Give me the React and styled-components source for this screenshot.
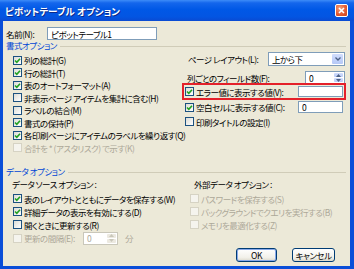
import React from 'react';
import styled, { createGlobalStyle } from 'styled-components';

const GlobalStyle = createGlobalStyle`
  html, body {
    margin: 0;
    padding: 0;
    background: #ffffff;
  }
  body {
    font-family: "Noto Sans CJK JP", "Noto Sans", sans-serif;
  }
`;

const Window = styled.div`
  width: 354px;
  height: 269px;
  display: flex;
  flex-direction: column;
  background: #0a4ed8;
  overflow: hidden;
  font-feature-settings: "palt";
`;

const TitleBar = styled.div`
  height: 21px;
  flex: none;
  box-sizing: border-box;
  padding: 0 6px 0 5px;
  display: flex;
  align-items: center;
  justify-content: space-between;
  background: linear-gradient(#3d8cf8 0%, #1466ec 14%, #0058e6 45%, #0355e2 80%, #0a4ad2 100%);
`;

const Title = styled.span`
  color: #ffffff;
  font-size: 9.5px;
  font-weight: bold;
  line-height: 12px;
  text-shadow: 1px 1px 0 #0b2a8a;
`;

const CloseButton = styled.div`
  width: 13px;
  height: 13px;
  box-sizing: border-box;
  border: 1px solid #ffffff;
  border-radius: 2px;
  background: radial-gradient(circle at 35% 30%, #f4a07c 0%, #e45c33 55%, #c8401c 100%);
  display: flex;
  align-items: center;
  justify-content: center;
`;

const Body = styled.div`
  flex: 1;
  min-height: 0;
  margin: 0 4px 3px 3px;
  background: #ece9d8;
  display: flex;
  flex-direction: column;
  font-size: 8.5px;
  letter-spacing: -0.5px;
  line-height: 12px;
  color: #000000;
`;

const NameRow = styled.div`
  display: flex;
  align-items: center;
  padding: 6px 0 0 3px;
  height: 13px;
`;

const Label = styled.span`
  flex: none;
  width: ${p => (p.$width ? `${p.$width}px` : 'auto')};
  padding-left: ${p => p.$indent || 0}px;
  color: ${p => (p.$disabled ? '#aca899' : '#000000')};
  white-space: nowrap;
`;

const TextBox = styled.div`
  box-sizing: border-box;
  width: ${p => p.$width}px;
  height: ${p => p.$height || 13}px;
  margin-right: ${p => p.$right || 0}px;
  border: 1px solid #7f9db9;
  background: #ffffff;
  padding-left: 3px;
  display: flex;
  align-items: center;
  white-space: nowrap;
`;

const SectionHeader = styled.div`
  display: flex;
  align-items: center;
  gap: 3px;
  height: 10px;
  margin-top: ${p => p.$top || 0}px;
  padding: 0 4px 0 3px;
  color: #0046d5;
  white-space: nowrap;

  &::after {
    content: '';
    flex: 1;
    height: 1px;
    margin-top: 3px;
    background: #d0ccb8;
  }
`;

const Columns = styled.div`
  display: grid;
  grid-template-columns: ${p => p.$left}px 1fr;
  margin-top: ${p => p.$top || 0}px;
  padding-right: 4px;
`;

const Column = styled.div`
  display: flex;
  flex-direction: column;
  padding-top: ${p => p.$top || 0}px;
  padding-left: ${p => p.$left || 0}px;
`;

const Row = styled.div`
  display: flex;
  align-items: center;
  gap: ${p => p.$gap ?? 2}px;
  height: ${p => p.$h || 12.5}px;
  margin-top: ${p => p.$top || 0}px;
  justify-content: ${p => (p.$spread ? 'space-between' : 'flex-start')};
  white-space: nowrap;
`;

const Highlight = styled.div`
  box-sizing: border-box;
  height: 17px;
  margin: -1px 0 0 -3px;
  padding: 0 1px 0 1px;
  border: 2px solid #e4202a;
  display: flex;
  align-items: center;
  justify-content: space-between;
  white-space: nowrap;
`;

const Box = styled.span`
  flex: none;
  box-sizing: border-box;
  width: 9px;
  height: 9px;
  border: 1px solid ${p => (p.$disabled ? '#d6d3c4' : '#1c5180')};
  background: ${p => (p.$disabled ? '#f5f4ee' : 'linear-gradient(135deg, #dcdcd5, #ffffff)')};
  display: flex;
  align-items: center;
  justify-content: center;
`;

const Control = styled.div`
  box-sizing: border-box;
  flex: none;
  width: ${p => p.$width}px;
  height: ${p => p.$height || 13}px;
  margin-right: ${p => p.$right || 0}px;
  border: 1px solid ${p => (p.$disabled ? '#c9c7ba' : '#7f9db9')};
  background: #ffffff;
  color: ${p => (p.$disabled ? '#aca899' : '#000000')};
  display: flex;
  align-items: stretch;
`;

const ControlText = styled.span`
  flex: 1;
  padding-left: 3px;
  display: flex;
  align-items: center;
`;

const DropButton = styled.span`
  width: 11px;
  margin: 1px;
  border-radius: 1px;
  background: linear-gradient(#d2defd, #b5c8f7);
  display: flex;
  align-items: center;
  justify-content: center;
`;

const SpinButtons = styled.span`
  width: 9px;
  margin: 1px;
  display: flex;
  flex-direction: column;
  gap: 1px;
`;

const SpinHalf = styled.span`
  flex: 1;
  border-radius: 1px;
  background: ${p => (p.$disabled ? '#ece9e0' : 'linear-gradient(#d2defd, #b9cbf8)')};
  display: flex;
  align-items: center;
  justify-content: center;
`;

const ButtonRow = styled.div`
  display: flex;
  justify-content: flex-end;
  gap: 15px;
  margin-top: 3px;
  padding-right: 15px;
`;

const Button = styled.div`
  box-sizing: border-box;
  width: ${p => p.$width}px;
  height: 14px;
  border: 1px solid #003c74;
  border-radius: 3px;
  background: linear-gradient(#ffffff 0%, #f2f1ea 70%, #dcd9cc 100%);
  box-shadow: ${p => (p.$default ? 'inset 0 0 0 1px #88a9ea' : 'none')};
  display: flex;
  align-items: center;
  justify-content: center;
`;

const Check = ({ on, disabled }) => (
  <Box $disabled={disabled}>
    {on && (
      <svg width="7" height="7" viewBox="0 0 7 7">
        <polyline points="1,3.5 2.8,5.3 6,1.8" fill="none" stroke="#21a121" strokeWidth="1.6" />
      </svg>
    )}
  </Box>
);

const Spin = ({ width, value, disabled, right }) => (
  <Control $width={width} $disabled={disabled} $right={right}>
    <ControlText>{value}</ControlText>
    <SpinButtons>
      <SpinHalf $disabled={disabled}>
        <svg width="5" height="3" viewBox="0 0 5 3">
          <polygon points="0,3 2.5,0 5,3" fill={disabled ? '#c9c7ba' : '#4d6185'} />
        </svg>
      </SpinHalf>
      <SpinHalf $disabled={disabled}>
        <svg width="5" height="3" viewBox="0 0 5 3">
          <polygon points="0,0 2.5,3 5,0" fill={disabled ? '#c9c7ba' : '#4d6185'} />
        </svg>
      </SpinHalf>
    </SpinButtons>
  </Control>
);

const formatChecks = [
  ['列の総計(G)', true],
  ['行の総計(T)', true],
  ['表のオートフォーマット(A)', true],
  ['非表示ページ アイテムを集計に含む(H)', false],
  ['ラベルの結合(M)', false],
  ['書式の保持(P)', true],
  ['各印刷ページにアイテムのラベルを繰り返す(Q)', true],
  ['合計を * (アスタリスク) で示す(K)', false, true],
];

const sourceChecks = [
  ['表のレイアウトとともにデータを保存する(W)', true],
  ['詳細データの表示を有効にする(D)', true],
  ['開くときに更新する(R)', false],
];

const externalChecks = [
  'パスワードを保存する(S)',
  'バックグラウンドでクエリを実行する(B)',
  'メモリを最適化する(Z)',
];

export default function App() {
  return (
    <>
      <GlobalStyle />
      <Window>
        <TitleBar>
          <Title>ピボットテーブル オプション</Title>
          <CloseButton>
            <svg width="7" height="7" viewBox="0 0 7 7">
              <path d="M1 1 L6 6 M6 1 L1 6" stroke="#ffffff" strokeWidth="1.6" />
            </svg>
          </CloseButton>
        </TitleBar>
        <Body>
          <NameRow>
            <Label $width={41}>名前(N):</Label>
            <TextBox $width={110}>ピボットテーブル1</TextBox>
          </NameRow>

          <SectionHeader>書式オプション</SectionHeader>
          <Columns $left={182} $top={2}>
            <Column $top={2} $left={10}>
              {formatChecks.map(([text, on, disabled]) => (
                <Row key={text}>
                  <Check on={on} disabled={disabled} />
                  <Label $disabled={disabled}>{text}</Label>
                </Row>
              ))}
            </Column>
            <Column>
              <Row $h={14} $spread>
                <Label $indent={3}>ページ レイアウト(L):</Label>
                <Control $width={77} $height={14} $right={1}>
                  <ControlText>上から下</ControlText>
                  <DropButton>
                    <svg width="6" height="4" viewBox="0 0 6 4">
                      <polyline points="0.5,0.5 3,3 5.5,0.5" fill="none" stroke="#4d6185" strokeWidth="1.3" />
                    </svg>
                  </DropButton>
                </Control>
              </Row>
              <Row $h={13} $top={5} $spread>
                <Label $indent={2}>列ごとのフィールド数(F):</Label>
                <Spin width={40} value="0" right={1} />
              </Row>
              <Highlight>
                <Row $h={13}>
                  <Check on />
                  <Label>エラー値に表示する値(V):</Label>
                </Row>
                <TextBox $width={45} $height={11} />
              </Highlight>
              <Row $h={14} $spread>
                <Row $h={14}>
                  <Check on />
                  <Label>空白セルに表示する値(C):</Label>
                </Row>
                <TextBox $width={45} $height={12} $right={3}>0</TextBox>
              </Row>
              <Row $h={15}>
                <Check />
                <Label>印刷タイトルの設定(I)</Label>
              </Row>
            </Column>
          </Columns>

          <SectionHeader $top={12}>データ オプション</SectionHeader>
          <Columns $left={187}>
            <Column $left={10}>
              <Row $h={13} $top={1}>
                <Label style={{ marginLeft: -1 }}>データ ソース オプション :</Label>
              </Row>
              <Row $h={13} $top={2}>
                <Check on={sourceChecks[0][1]} />
                <Label>{sourceChecks[0][0]}</Label>
              </Row>
              {sourceChecks.slice(1).map(([text, on]) => (
                <Row key={text} $h={13}>
                  <Check on={on} />
                  <Label>{text}</Label>
                </Row>
              ))}
              <Row $h={14}>
                <Check disabled />
                <Label $width={57} $disabled>更新の間隔(E):</Label>
                <Spin width={35} value="0" disabled />
                <Label $indent={5} $disabled>分</Label>
              </Row>
            </Column>
            <Column>
              <Row $h={13} $top={1}>
                <Label $indent={4}>外部データ オプション :</Label>
              </Row>
              {externalChecks.map((text, i) => (
                <Row key={text} $h={13} $top={i === 0 ? 2 : 0}>
                  <Check disabled />
                  <Label $disabled>{text}</Label>
                </Row>
              ))}
            </Column>
          </Columns>

          <ButtonRow>
            <Button $width={41} $default>OK</Button>
            <Button $width={43}>キャンセル</Button>
          </ButtonRow>
        </Body>
      </Window>
    </>
  );
}
